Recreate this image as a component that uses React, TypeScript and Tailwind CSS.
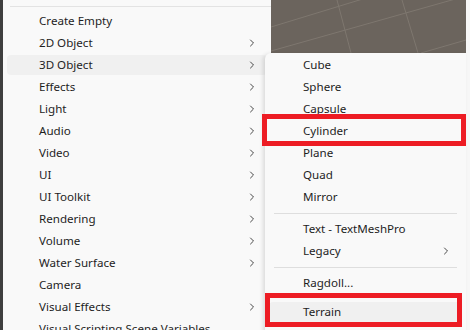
import { ChevronRight } from "lucide-react";

type Entry = { label: string; sub?: boolean; active?: boolean } | "sep" | { gap: number };

const mainItems: Entry[] = [
  { label: "Create Empty" },
  { label: "2D Object", sub: true },
  { label: "3D Object", sub: true, active: true },
  { label: "Effects", sub: true },
  { label: "Light", sub: true },
  { label: "Audio", sub: true },
  { label: "Video", sub: true },
  { label: "UI", sub: true },
  { label: "UI Toolkit", sub: true },
  { label: "Rendering", sub: true },
  { label: "Volume", sub: true },
  { label: "Water Surface", sub: true },
  { label: "Camera" },
  { label: "Visual Effects", sub: true },
  { label: "Visual Scripting Scene Variables" },
];

const subItems: Entry[] = [
  { label: "Cube" },
  { label: "Sphere" },
  { label: "Capsule" },
  { label: "Cylinder" },
  { label: "Plane" },
  { label: "Quad" },
  { label: "Mirror" },
  "sep",
  { label: "Text - TextMeshPro" },
  { label: "Legacy", sub: true },
  "sep",
  { label: "Ragdoll..." },
  { gap: 7 },
  { label: "Terrain", active: true },
];

function MenuList({ items, textPad, chevronPad }: { items: Entry[]; textPad: string; chevronPad: string }) {
  return (
    <>
      {items.map((it, i) => {
        if (it === "sep") {
          return (
            <div key={i} className="h-[10px] shrink-0 flex items-center px-[9px]">
              <div className="h-px w-full bg-[#dedede]" />
            </div>
          );
        }
        if ("gap" in it) return <div key={i} className="h-[7px] shrink-0" />;
        return (
          <div key={i} className="h-[22px] shrink-0 px-1 py-px">
            <div
              className={`h-full rounded-[4px] flex items-center justify-between ${textPad} ${chevronPad} ${
                it.active ? "bg-[#f0f0f0]" : ""
              }`}
            >
              <span className="whitespace-nowrap">{it.label}</span>
              {it.sub && <ChevronRight className="w-[12px] h-[12px] text-[#333]" strokeWidth={1.8} />}
            </div>
          </div>
        );
      })}
    </>
  );
}

function SceneGrid() {
  return (
    <svg width="195" height="53" viewBox="0 0 195 53" className="block">
      <rect width="195" height="53" fill="#6b645d" />
      <g stroke="#7e776f" strokeWidth="1" fill="none">
        <line x1="0" y1="27" x2="95" y2="-2" />
        <line x1="0" y1="51" x2="195" y2="-4" />
        <line x1="66" y1="0" x2="80" y2="53" />
        <line x1="131" y1="0" x2="147" y2="53" />
        <line x1="150" y1="53" x2="195" y2="40" />
      </g>
    </svg>
  );
}

export default function App() {
  return (
    <div
      className="relative w-[470px] h-[330px] overflow-hidden flex bg-[#f7f7f7] text-[11.6px] text-[#1e1e1e]"
      style={{ fontFamily: '"Noto Sans", "Open Sans", sans-serif' }}
    >
      {/* left window edge */}
      <div className="w-[3px] bg-[#3f3f3f] shrink-0" />

      {/* main context menu */}
      <div className="w-[268px] shrink-0 bg-[#f9f9f9] flex flex-col">
        <div className="h-[10px] shrink-0 flex items-start pt-[6px] pl-[7px]">
          <div className="h-px w-full bg-[#e3e3e3]" />
        </div>
        <MenuList items={mainItems} textPad="pl-[32px]" chevronPad="pr-[9px]" />
      </div>

      {/* scene view behind */}
      <div className="flex flex-col">
        <SceneGrid />
        <div className="flex-1 bg-[#f7f7f7]" />
      </div>

      {/* 3D Object submenu */}
      <div className="absolute left-[265px] top-[53px] w-[201px] h-[290px] bg-[#f9f9f9] rounded-tl-[6px] shadow-[-2px_1px_4px_rgba(0,0,0,0.12)] pt-px flex flex-col">
        <MenuList items={subItems} textPad="pl-[34px]" chevronPad="pr-[10px]" />
      </div>

      {/* red highlight boxes */}
      <div className="absolute left-[262px] top-[114px] w-[204px] h-[32px] border-[5px] border-[#ed1c24]" />
      <div className="absolute left-[265px] top-[293px] w-[197px] h-[34px] border-[5px] border-[#ed1c24]" />
    </div>
  );
}
